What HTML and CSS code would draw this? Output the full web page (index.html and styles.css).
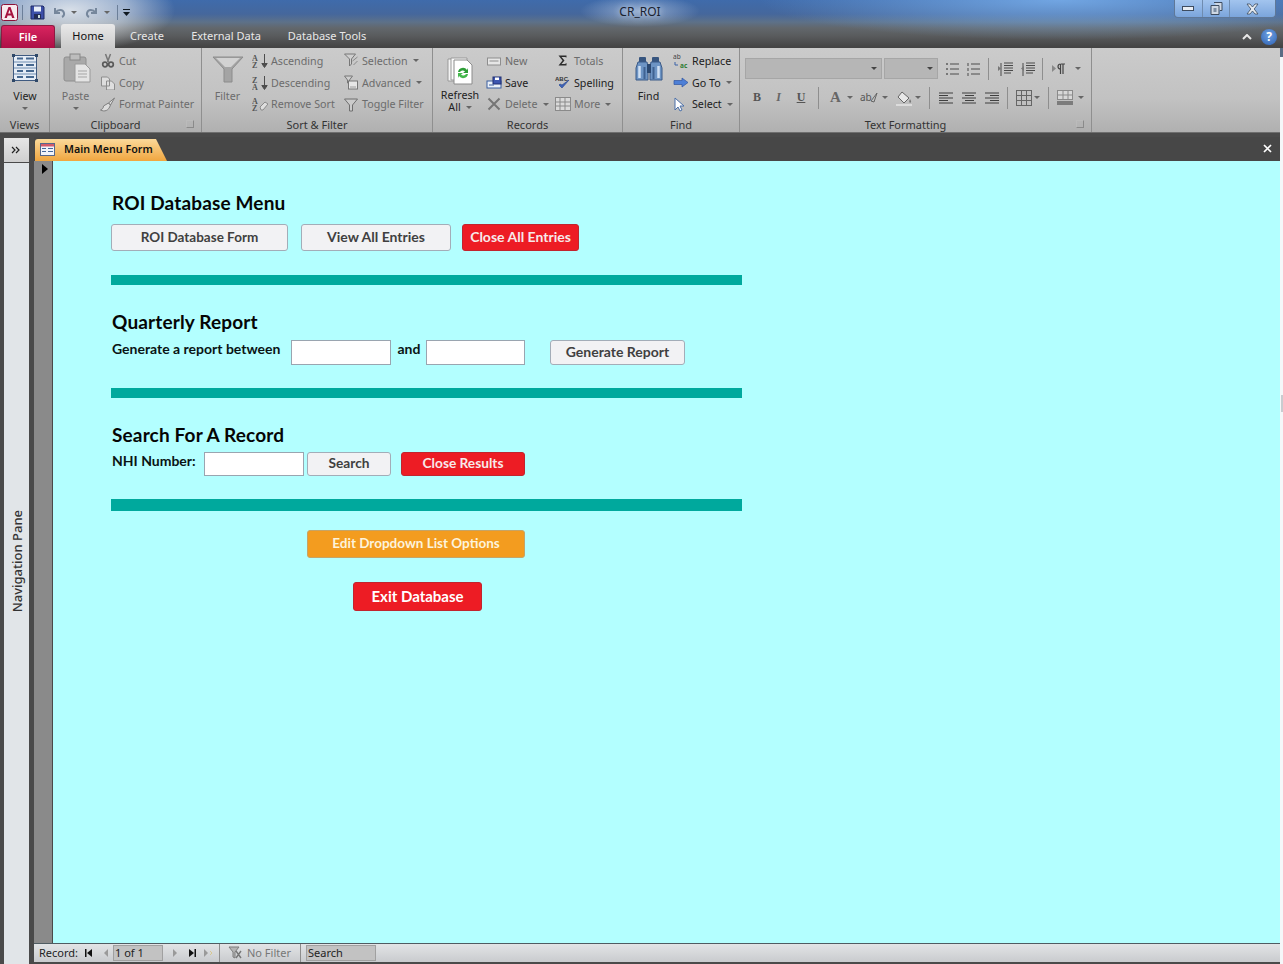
FILE: index.html
```html
<!DOCTYPE html>
<html lang="en">
<head>
<meta charset="UTF-8" />
<title>CR_ROI</title>
<link rel="stylesheet" href="styles.css">
</head>
<body>

<header class="chrome">
  <div class="titlebar">
    <div class="qat">
      <svg class="qat-logo" width="17" height="17" viewBox="0 0 17 17"><rect x=".5" y=".5" width="16" height="16" rx="2" fill="#f7e9ee" stroke="#8c1238"/><path d="M3.500 14 7.500 3h2l4 11h-2.400l-.8-2.500H6.600L5.800 14zM7.200 9.600h2.500L8.500 5.800z" fill="#a5123f"/></svg>
      <i class="qat-sep ml4"></i>
      <svg class="ml7" width="15" height="15" viewBox="0 0 15 15"><path d="M1 1h12l1 1v12H1z" fill="#3c4fa8" stroke="#1f2a66"/><rect x="4" y="1.500" width="7" height="5" fill="#e8eef8"/><rect x="4" y="9" width="7" height="5" fill="#222b55"/><rect x="8" y="10" width="2" height="3" fill="#cdd"/></svg>
      <svg class="ml7" width="14" height="13" viewBox="0 0 14 13"><path d="M3 2v5h5M3.500 6.500C6 3 11 3 12 7c.4 2-1 3.500-2 4" fill="none" stroke="#76879c" stroke-width="2"/></svg>
      <i class="caret caret-qat"></i>
      <svg class="ml8" width="14" height="13" viewBox="0 0 14 13"><path d="M11 2v5H6M10.500 6.500C8 3 3 3 2 7c-.4 2 1 3.500 2 4" fill="none" stroke="#76879c" stroke-width="2"/></svg>
      <i class="caret caret-qat"></i>
      <i class="qat-sep ml7"></i>
      <svg class="ml5" width="8" height="8" viewBox="0 0 8 8"><path d="M0 1h7v1H0zM0 4h7L3.500 8z" fill="#101820"/></svg>
    </div>
    <div class="doc-title">CR_ROI</div>
    <div class="win-btns">
      <span class="win-btn win-min"><svg width="13" height="7" viewBox="0 0 13 7"><rect x=".5" y="1.500" width="11" height="4" fill="#e8edf3" stroke="#3e4c60"/></svg></span>
      <span class="win-btn win-max"><svg width="13" height="13" viewBox="0 0 13 13"><path d="M4 .5h8v8h-2M1 3.500h8v9H1z" fill="#cfd8e4" stroke="#3e4c60"/><rect x="3.500" y="6" width="3" height="4" fill="#7d8ea3"/></svg></span>
      <span class="win-btn win-close"><svg width="15" height="12" viewBox="0 0 15 12"><path d="M2 1h3l2.500 3L10 1h3L9.200 6 13 11h-3L7.500 8 5 11H2l3.800-5z" fill="#e4e9ef" stroke="#3e4c60" stroke-width=".8"/></svg></span>
    </div>
  </div>
  <nav class="tabstrip">
    <span class="tab tab-file">File</span>
    <span class="tab tab-home">Home</span>
    <span class="tab tab-create">Create</span>
    <span class="tab tab-ext">External Data</span>
    <span class="tab tab-tools">Database Tools</span>
    <span class="tab-right">
      <svg width="10" height="6" viewBox="0 0 10 6"><path d="M1 5l4-4 4 4" fill="none" stroke="#e8e8e8" stroke-width="2"/></svg>
      <span class="help">?</span>
    </span>
  </nav>
</header>

<section class="ribbon">
  <div class="group g-views">
    <div class="group-body">
      <div class="big big-view">
        <svg width="26" height="28" viewBox="0 0 26 28"><rect x="1.500" y="1.500" width="23" height="25" fill="#e6edf6" stroke="#3f5a80"/><path d="M2 8h22M2 14h22M2 20h22" stroke="#6f8db0"/><path d="M5 4.500h6M14 4.500h8M5 11h6M14 11h8M5 17h6M14 17h8M5 23h6M14 23h8" stroke="#46688f" stroke-width="2"/><path d="M0 0h3v3H0zM23 0h3v3h-3zM0 25h3v3H0zM23 25h3v3h-3z" fill="#2f4868"/></svg>
        <span class="big-label">View</span>
        <i class="caret"></i>
      </div>
    </div>
    <div class="group-label">Views</div>
  </div>

  <div class="group g-clip">
    <div class="group-body">
      <div class="big big-paste off">
        <svg width="28" height="30" viewBox="0 0 28 30"><rect x="1" y="4" width="22" height="24" rx="2" fill="#a9a9a9" stroke="#8e8e8e"/><rect x="7" y="1" width="10" height="6" fill="#bdbdbd" stroke="#888"/><path d="M12 11h10l5 5v13H12z" fill="#e4e4e4" stroke="#9a9a9a"/><path d="M15 18h9M15 21h9M15 24h9" stroke="#a5a5a5"/></svg>
        <span class="big-label">Paste</span>
        <i class="caret"></i>
      </div>
      <div class="stack off">
        <div class="item"><svg width="13" height="15" viewBox="0 0 13 15"><path d="M4 1l3 8M9 1L6 9" stroke="#777" stroke-width="1.500"/><circle cx="3.500" cy="11.500" r="2.300" fill="none" stroke="#5a5a5a" stroke-width="1.700"/><circle cx="9.500" cy="11.500" r="2.300" fill="none" stroke="#5a5a5a" stroke-width="1.700"/></svg>Cut</div>
        <div class="item"><svg width="15" height="14" viewBox="0 0 15 14"><path d="M1 1h6l2 2v7H1zM6 5h5l3 3v6H6z" fill="#dedede" stroke="#8d8d8d"/></svg>Copy</div>
        <div class="item"><svg width="15" height="15" viewBox="0 0 15 15"><path d="M14 1L8 6l2 2zM8 6l-5 3c0 2-1 3-3 4 4 2 8 1 10-5z" fill="#dcdcdc" stroke="#7f7f7f"/></svg>Format Painter</div>
      </div>
    </div>
    <div class="group-label label-clip">Clipboard<i class="launcher"></i></div>
  </div>

  <div class="group g-sort">
    <div class="group-body">
      <div class="big big-filter off">
        <svg width="32" height="27" viewBox="0 0 32 27"><path d="M1 1h30L20 13v13h-8V13z" fill="#a4a4a4" stroke="#8c8c8c"/><path d="M4 2h24l-9 9h-6z" fill="#d2d2d2"/></svg>
        <span class="big-label">Filter</span>
      </div>
      <div class="stack stack-a off">
        <div class="item"><svg width="16" height="16" viewBox="0 0 16 16"><text x="0" y="7.500" class="az">A</text><text x="0" y="15" class="az">Z</text><path d="M12.500 1v12M9.800 10.500l2.700 4 2.700-4z" fill="#4d4d4d" stroke="#4d4d4d"/></svg>Ascending</div>
        <div class="item"><svg width="16" height="16" viewBox="0 0 16 16"><text x="0" y="7.500" class="az">Z</text><text x="0" y="15" class="az">A</text><path d="M12.500 1v12M9.800 10.500l2.700 4 2.700-4z" fill="#4d4d4d" stroke="#4d4d4d"/></svg>Descending</div>
        <div class="item"><svg width="16" height="16" viewBox="0 0 16 16"><text x="0" y="7.500" class="az">A</text><text x="0" y="15" class="az">Z</text><path d="M8 11l5-5 3 2-5 6H9z" fill="#dedede" stroke="#8a8a8a"/></svg>Remove Sort</div>
      </div>
      <div class="stack off">
        <div class="item"><svg width="15" height="15" viewBox="0 0 15 15"><path d="M1 1h11L8 6v5l-2 2V6z" fill="#cfcfcf" stroke="#777"/><path d="M9 8l5-4M10 12l4-4" stroke="#8a8a8a"/></svg>Selection<i class="caret"></i></div>
        <div class="item"><svg width="15" height="15" viewBox="0 0 15 15"><path d="M1 1h8L6 5v4L4 8V5z" fill="#cfcfcf" stroke="#777"/><rect x="5" y="6" width="9" height="8" fill="#e6e6e6" stroke="#777"/><path d="M7 12h1M9 12h1M11 12h1" stroke="#555"/></svg>Advanced<i class="caret"></i></div>
        <div class="item"><svg width="15" height="15" viewBox="0 0 15 15"><path d="M1 2h13L9 8v6H6V8z" fill="#cbcbcb" stroke="#6f6f6f"/></svg>Toggle Filter</div>
      </div>
    </div>
    <div class="group-label">Sort &amp; Filter</div>
  </div>

  <div class="group g-records">
    <div class="group-body">
      <div class="big big-refresh">
        <svg width="27" height="29" viewBox="0 0 27 29"><path d="M1 3h16v22H1z" fill="#f4f4f4" stroke="#999"/><path d="M4 2h16v22H4z" fill="#fafafa" stroke="#999"/><path d="M7 4h13l5 5v19H7z" fill="#fff" stroke="#8c8c8c"/><path d="M11 16a5 5 0 0 1 9-2l1-2v5h-5l2-1.500a3 3 0 0 0-5 .5z" fill="#2e9e38"/><path d="M21 18a5 5 0 0 1-9 2l-1 2v-5h5l-2 1.500a3 3 0 0 0 5-.5z" fill="#45b84c"/></svg>
        <span class="big-label">Refresh<br>All<i class="caret caret-inline"></i></span>
      </div>
      <div class="stack stack-c">
        <div class="item off"><svg width="15" height="11" viewBox="0 0 15 11"><rect x="1" y="3" width="13" height="7" fill="#e6e6e6" stroke="#8e8e8e"/><path d="M3 6h9" stroke="#8e8e8e"/></svg>New</div>
        <div class="item"><svg width="16" height="13" viewBox="0 0 16 13"><rect x="1" y="5" width="14" height="7" fill="#eaf0f8" stroke="#3a5fa0"/><rect x="7" y="1" width="8" height="7" fill="#3c55b0" stroke="#1f2f72"/><rect x="9" y="1.500" width="4" height="2.500" fill="#fff"/><path d="M3 9h5" stroke="#3a5fa0"/></svg>Save</div>
        <div class="item off"><svg width="14" height="14" viewBox="0 0 14 14"><path d="M1.500 1.500l11 11M12.500 1.500l-11 11" stroke="#767676" stroke-width="2"/></svg>Delete<i class="caret"></i></div>
      </div>
      <div class="stack">
        <div class="item off"><svg width="15" height="13" viewBox="0 0 15 13"><path d="M3 1.500h8v2L9.500 3H6l3 3.500L6 10h3.500L11 9v2.500H3L7 6.500z" fill="#2b2b2b"/></svg>Totals</div>
        <div class="item"><svg width="16" height="15" viewBox="0 0 16 15"><text x="0" y="6" class="abc">ABC</text><path d="M4 10l3 3 7-8-7 5-2-1z" fill="#3d63b8" stroke="#2c4c96" stroke-width=".7"/></svg>Spelling</div>
        <div class="item off"><svg width="16" height="14" viewBox="0 0 16 14"><rect x=".5" y=".5" width="15" height="13" fill="#dadada" stroke="#8a8a8a"/><path d="M1 5h14M1 9h14M5 1v12M10 1v12" stroke="#8a8a8a"/></svg>More<i class="caret"></i></div>
      </div>
    </div>
    <div class="group-label">Records</div>
  </div>

  <div class="group g-find">
    <div class="group-body">
      <div class="big big-find">
        <svg width="28" height="24" viewBox="0 0 28 24"><rect x="4" y="0" width="7" height="6" rx="1" fill="#37557f"/><rect x="17" y="0" width="7" height="6" rx="1" fill="#37557f"/><path d="M3 5h9l1 5v13H1V11zM25 5h-9l-1 5v13h12V11z" fill="#6d94c4" stroke="#3a5a88"/><rect x="12" y="7" width="4" height="9" fill="#2b4870"/><path d="M4.500 9v12M23.500 9v12" stroke="#cfe0f3" stroke-width="2.500"/><path d="M9.500 10v12M18.500 10v12" stroke="#3f6292" stroke-width="2"/></svg>
        <span class="big-label">Find</span>
      </div>
      <div class="stack">
        <div class="item"><svg class="ico-rep" width="16" height="18" viewBox="0 0 16 18"><text x="0" y="7" class="rep">ab</text><text x="7" y="16" class="rep rep-g">ac</text><path d="M2 10v3h3" fill="none" stroke="#3a63a8"/></svg>Replace</div>
        <div class="item"><svg width="16" height="11" viewBox="0 0 16 11"><path d="M1 3.500h8V1l6 4.500L9 10V7.500H1z" fill="#4d7fd6" stroke="#2f55a0" stroke-width=".7"/></svg>Go To<i class="caret"></i></div>
        <div class="item"><svg width="16" height="15" viewBox="0 0 16 15"><path d="M2 1v12l3-3 2 4 2-1-2-4h4z" fill="#fff" stroke="#4a6fa8"/></svg>Select<i class="caret"></i></div>
      </div>
    </div>
    <div class="group-label">Find</div>
  </div>

  <div class="group g-text">
    <div class="group-body text-body">
      <div class="text-row">
        <span class="combo combo-font"><i class="caret"></i></span>
        <span class="combo combo-size"><i class="caret"></i></span>
        <svg class="ml7" width="14" height="14" viewBox="0 0 14 14"><path d="M5 2h9M5 7h9M5 12h9" stroke="#4d4d4d"/><path d="M1 1h2v2H1zM1 6h2v2H1zM1 11h2v2H1z" fill="#777"/></svg>
        <svg class="ml7" width="14" height="14" viewBox="0 0 14 14"><path d="M5 2h9M5 7h9M5 12h9" stroke="#4d4d4d"/><path d="M1 1h2v3H1zM1 6h2v3H1zM1 11h2v3H1z" fill="#888"/></svg>
        <i class="vsep ml8"></i>
        <svg class="ml9" width="16" height="14" viewBox="0 0 16 14"><path d="M6 1h9M6 3.500h9M6 6h9M6 8.500h9M6 11h7M3 1v13" stroke="#4a4a4a"/><path d="M0 4l3 2.500L0 9z" fill="#777"/></svg>
        <svg class="ml6" width="16" height="14" viewBox="0 0 16 14"><path d="M6 1h9M6 3.500h9M6 6h9M6 8.500h9M6 11h7M3 1v13" stroke="#4a4a4a"/><path d="M4 4L1 6.500 4 9z" fill="#777"/></svg>
        <i class="vsep ml6"></i>
        <svg class="ml9" width="13" height="11" viewBox="0 0 13 11"><path d="M0 2l4 3.500L0 9z" fill="#888"/><path d="M9 1h4M8.500 1v10M11 1v10M8.500 1a2.500 2.500 0 0 0 0 5" fill="none" stroke="#444" stroke-width="1.200"/></svg>
        <i class="caret ml10"></i>
      </div>
      <div class="text-row text-row-2">
        <span class="fmt-b">B</span>
        <span class="fmt-i">I</span>
        <span class="fmt-u">U</span>
        <i class="vsep"></i>
        <span class="fmt-a ml11">A</span><i class="caret ml6"></i>
        <svg class="ml7" width="19" height="14" viewBox="0 0 19 14"><text x="0" y="10" class="hl">ab</text><path d="M11 10l6-8-3 9z" fill="none" stroke="#666"/></svg><i class="caret ml3"></i>
        <svg class="ml8" width="17" height="16" viewBox="0 0 17 16"><path d="M6 2l7 6-5 5-6-6z" fill="#e8e8e8" stroke="#666"/><path d="M14 9c1 2 2 3 0 4-1-1-1-2 0-4z" fill="#777"/><rect x="0" y="14" width="16" height="2" fill="#dcdcdc"/></svg><i class="caret ml2"></i>
        <i class="vsep ml8"></i>
        <svg class="ml9" width="15" height="12" viewBox="0 0 15 12"><path d="M0 1h14M0 3.500h9M0 6h14M0 8.500h9M0 11h14" stroke="#3f3f3f"/></svg>
        <svg class="ml8" width="15" height="12" viewBox="0 0 15 12"><path d="M0 1h14M3 3.500h9M0 6h14M3 8.500h9M0 11h14" stroke="#3f3f3f"/></svg>
        <svg class="ml8" width="15" height="12" viewBox="0 0 15 12"><path d="M0 1h14M5 3.500h9M0 6h14M5 8.500h9M0 11h14" stroke="#3f3f3f"/></svg>
        <i class="vsep ml7"></i>
        <svg class="ml8" width="16" height="16" viewBox="0 0 16 16"><rect x=".5" y=".5" width="15" height="15" fill="none" stroke="#666"/><path d="M5.500 1v14M10.500 1v14M1 5.500h14M1 10.500h14" stroke="#666"/></svg><i class="caret ml2"></i>
        <i class="vsep ml8"></i>
        <svg class="ml8" width="17" height="15" viewBox="0 0 17 15"><rect x=".5" y=".5" width="15" height="9" fill="#d8d8d8" stroke="#8a8a8a"/><path d="M1 5h14M6 1v8M11 1v8" stroke="#8a8a8a"/><rect x="0" y="11" width="16" height="4" fill="#7c7c7c"/></svg><i class="caret ml4"></i>
      </div>
    </div>
    <div class="group-label label-text">Text Formatting<i class="launcher"></i></div>
  </div>
  <div class="ribbon-rest"></div>
</section>

<div class="workspace">
  <aside class="navpane">
    <div class="nav-toggle">
      <svg width="9" height="8" viewBox="0 0 9 8"><path d="M1 1l3 3-3 3M5 1l3 3-3 3" fill="none" stroke="#222" stroke-width="1.200"/></svg>
    </div>
    <div class="nav-shutter"><span class="nav-text">Navigation Pane</span></div>
  </aside>

  <main class="document">
    <div class="doc-tabs">
      <span class="doc-tab">
        <svg width="15" height="13" viewBox="0 0 15 13"><rect x=".5" y=".5" width="14" height="12" fill="#f2f4fa" stroke="#56688c"/><rect x="1" y="1" width="13" height="2.500" fill="#d25a6a"/><path d="M2 5.500h4M2 8.500h4M8 5.500h5M8 8.500h5" stroke="#46689a" stroke-width="1.200"/></svg>
        Main Menu Form
      </span>
      <svg class="doc-close" width="9" height="9" viewBox="0 0 9 9"><path d="M1 1l7 7M8 1L1 8" stroke="#fff" stroke-width="1.700"/></svg>
    </div>

    <div class="form-area">
      <div class="selector"><i class="selector-arrow"></i></div>
      <div class="form">
        <section class="form-section sec-menu">
          <h2>ROI Database Menu</h2>
          <div class="row row-menu">
            <button class="btn btn-db">ROI Database Form</button>
            <button class="btn btn-view">View All Entries</button>
            <button class="btn btn-red btn-closeall">Close All Entries</button>
          </div>
        </section>
        <div class="divider"></div>

        <section class="form-section sec-report">
          <h2>Quarterly Report</h2>
          <div class="row row-report">
            <label class="lbl lbl-between">Generate a report between</label>
            <input class="field field-a" type="text">
            <label class="lbl lbl-and">and</label>
            <input class="field field-b" type="text">
            <button class="btn btn-generate">Generate Report</button>
          </div>
        </section>
        <div class="divider"></div>

        <section class="form-section sec-search">
          <h2>Search For A Record</h2>
          <div class="row row-search">
            <label class="lbl lbl-nhi">NHI Number:</label>
            <input class="field field-nhi" type="text">
            <button class="btn btn-search">Search</button>
            <button class="btn btn-red btn-results">Close Results</button>
          </div>
        </section>
        <div class="divider divider-thick"></div>

        <button class="btn btn-orange">Edit Dropdown List Options</button>
        <button class="btn btn-red btn-exit">Exit Database</button>
      </div>
    </div>

    <footer class="statusbar">
      <span class="rec-label">Record:</span>
      <svg class="rec-first" width="7" height="8" viewBox="0 0 7 8"><path d="M0 0h1.500v8H0zM7 0v8L2 4z" fill="#111"/></svg>
      <svg class="rec-prev" width="4" height="8" viewBox="0 0 4 8"><path d="M4 0v8L0 4z" fill="#9a9a9a"/></svg>
      <span class="rec-box">1 of 1</span>
      <svg class="rec-next" width="4" height="8" viewBox="0 0 4 8"><path d="M0 0v8l4-4z" fill="#9a9a9a"/></svg>
      <svg class="rec-last" width="7" height="8" viewBox="0 0 7 8"><path d="M7 0H5.500v8H7zM0 0v8l5-4z" fill="#111"/></svg>
      <svg class="rec-new" width="9" height="8" viewBox="0 0 9 8"><path d="M0 0v8l4-4z" fill="#9a9a9a"/><path d="M6 2l2 2-2 2" fill="none" stroke="#d8c890"/></svg>
      <i class="stat-sep stat-sep-a"></i>
      <svg class="rec-filter" width="15" height="13" viewBox="0 0 15 13"><path d="M1 1h10L7 6v6L5 11V6z" fill="#b4b4b4" stroke="#7d7d7d"/><path d="M8 5l5 7M13 5l-5 7" stroke="#777" stroke-width="1.400"/></svg>
      <span class="rec-nofilter">No Filter</span>
      <i class="stat-sep"></i>
      <span class="rec-search">Search</span>
    </footer>
  </main>
</div>
<i class="edge-notch"></i>

</body>
</html>
```

FILE: styles.css
```css
html, body { margin:0; padding:0; }
body { width:1283px; height:964px; overflow:hidden; font-family:"Noto Sans", sans-serif; font-size:10.700px; color:#222; background:linear-gradient(#5b6c84 57px, #f5f7f9 57px); position:relative; }

/* spacing helpers for the icon rows */
.ml2 { margin-left:2px !important; }
.ml3 { margin-left:3px !important; }
.ml4 { margin-left:4px !important; }
.ml5 { margin-left:5px !important; }
.ml6 { margin-left:6px !important; }
.ml7 { margin-left:7px !important; }
.ml8 { margin-left:8px !important; }
.ml9 { margin-left:9px !important; }
.ml10 { margin-left:10px !important; }
.ml11 { margin-left:11px !important; }

/* title bar + tabs */
.chrome { height:48px; background:
  radial-gradient(ellipse 105px 42px at 70px 10px, rgba(232,236,240,.9), rgba(232,236,240,.55) 55%, rgba(232,236,240,0) 100%),
  radial-gradient(ellipse 60px 16px at 640px 11px, rgba(210,225,245,.55), rgba(210,225,245,0) 100%),
  radial-gradient(ellipse 300px 40px at 1060px 0, rgba(130,185,245,.75), rgba(130,185,245,0) 100%),
  linear-gradient(#3f6bab 0, #45679c 14px, #5d7189 22px, #62676c 28px, #595b5d 36px, #444 47px); }
.titlebar { height:24px; display:flex; align-items:flex-start; position:relative; }
.qat { display:flex; align-items:center; padding:2px 0 0 1px; width:560px; box-sizing:border-box; height:22px; }
.qat-sep { width:1px; height:15px; background:#6c7f99; }
.caret-qat { margin-left:3px; border-top-color:#7a8ba2; }
.doc-title { width:160px; text-align:center; font-size:12px; line-height:23px; color:#1a2230; text-shadow:0 0 6px #dfe8f5; }
.win-btns { margin-left:auto; margin-right:7px; display:flex; height:17px; border:1px solid #5f7898; border-top:none; border-radius:0 0 4px 4px; background:linear-gradient(#a2c4ee,#7ba5dc); }
.win-btn { display:flex; align-items:center; justify-content:center; height:17px; border-right:1px solid #6f8cb0; box-sizing:border-box; }
.win-min { width:28px; }
.win-max { width:27px; }
.win-close { width:45px; border-right:none; }

.tabstrip { height:24px; display:flex; align-items:flex-end; position:relative; font-size:11px; }
.tab { display:block; height:23px; line-height:22px; text-align:center; color:#e8e8e8; }
.tab-file { width:54px; margin-left:1px; background:linear-gradient(#d8245f,#ad0f46); border:1px solid #8d1a42; border-bottom:none; box-sizing:border-box; border-radius:3px 3px 0 0; color:#fff; font-weight:600; }
.tab-home { width:54px; margin-left:6px; height:24px; line-height:23px; background:linear-gradient(#e9e9e9,#cbcbcb); color:#111; border-radius:3px 3px 0 0; }
.tab-create { width:64px; }
.tab-ext { width:94px; }
.tab-tools { width:108px; }
.tab-right { margin-left:auto; display:flex; align-items:center; gap:9px; height:22px; padding-right:6px; }
.help { width:16px; height:16px; border-radius:50%; background:radial-gradient(circle at 50% 35%,#6ea0e0,#2e62b4); color:#fff; font-weight:700; font-size:12px; line-height:16px; text-align:center; }

/* ribbon */
.ribbon { width:1280px; height:85px; display:flex; background:linear-gradient(#cbcbcb,#c2c2c2 60%,#b0b0b0); border-bottom:1px solid #6e6e6e; box-sizing:border-box; }
.group { display:flex; flex-direction:column; border-right:1px solid #8f8f8f; box-sizing:border-box; flex:none; height:84px; }
.group-body { height:67px; flex:none; display:flex; padding-top:2px; box-sizing:border-box; }
.group-label { height:17px; line-height:20px; text-align:center; color:#333; position:relative; font-size:11px; }
.label-clip { padding-right:20px; }
.label-text { padding-right:20px; }
.launcher { position:absolute; right:7px; top:5px; width:6px; height:6px; border:1px solid #8a8a8a; border-left-color:#bbb; border-top-color:#bbb; }
.g-views { width:50px; }
.g-clip { width:152px; }
.g-sort { width:231px; }
.g-records { width:190px; }
.g-find { width:117px; }
.g-text { width:352px; }
.ribbon-rest { flex:1; }

.off { color:#6c6c6c; }
.big { display:flex; flex-direction:column; align-items:center; line-height:13px; flex:none; }
.big svg { flex:none; }
.big-label { text-align:center; }
.big-view { width:50px; padding-top:4px; color:#222; }
.big-view .big-label { margin-top:8px; }
.big-view .caret { margin:4px 0 0; }
.big-paste { width:49px; margin-left:1px; padding-top:3px; }
.big-paste svg { margin-left:2px; }
.big-paste .big-label { margin-top:7px; }
.big-paste .caret { margin:4px 0 0; }
.big-filter { width:49px; padding-top:6px; margin-left:1px; }
.big-filter .big-label { margin-top:7px; }
.big-refresh { width:52px; padding-top:6px; color:#222; margin-left:1px; }
.big-refresh .big-label { margin-top:4px; line-height:12px; }
.big-find { width:49px; padding-top:7px; color:#222; margin-left:1px; }
.big-find .big-label { margin-top:9px; }
.stack { display:flex; flex-direction:column; flex:none; }
.stack-a { width:91px; }
.stack-c { width:69px; }
.item { height:22px; display:flex; align-items:center; white-space:nowrap; }
.item svg { width:16px; margin-right:3px; flex:none; }
.item:not(.off) { color:#1c1c1c; }
.off .item { color:#6c6c6c; }

.caret { display:inline-block; width:0; height:0; border:3px solid transparent; border-bottom:none; border-top:3px solid #666; margin-left:5px; flex:none; }
.caret-inline { vertical-align:2px; }

.az { font:700 8px "Liberation Serif", serif; fill:#555; }
.abc { font:700 6px "Liberation Sans", sans-serif; fill:#333; }
.rep { font:6.500px "Noto Sans", sans-serif; fill:#444; }
.rep-g { font-weight:700; fill:#2e7d32; }
.hl { font:10px "Noto Sans", sans-serif; fill:#555; }

.text-body { flex-direction:column; padding:10px 0 0 5px; }
.text-row { display:flex; align-items:center; height:21px; }
.text-row-2 { margin-top:8px; padding-left:8px; }
.combo { display:flex; align-items:center; justify-content:flex-end; height:21px; box-sizing:border-box; background:#b6b6b6; border:1px solid #a6a6a6; }
.combo .caret { margin:0 4px 0 0; border-top-color:#444; }
.combo-font { width:137px; }
.combo-size { width:54px; margin-left:2px; }
.text-row svg { flex:none; }
.vsep { width:1px; height:22px; background:#8e8e8e; flex:none; }
.fmt-b, .fmt-i, .fmt-u { font-family:"Liberation Serif", serif; font-weight:700; font-size:12px; color:#555; text-align:center; }
.fmt-b { width:8px; margin-right:14px; }
.fmt-i { font-style:italic; color:#666; width:7px; margin-right:14px; }
.fmt-u { text-decoration:underline; width:10px; margin-right:12px; }
.fmt-a { font-family:"Liberation Serif", serif; font-weight:700; font-size:15px; color:#666; }

/* workspace */
.workspace { width:1280px; height:831px; display:flex; padding-top:4px; box-sizing:border-box; background:#4a4a4a; }
.navpane { width:25px; margin:0 1px 0 4px; flex:none; display:flex; flex-direction:column; }
.nav-toggle { height:24px; margin:1px 0 1px 0; display:flex; align-items:center; justify-content:center; background:linear-gradient(#e6e6e6,#cfcfcf); box-sizing:border-box; }
.nav-toggle svg { margin-right:3px; }
.nav-shutter { flex:1; background:#e1e5e8; display:flex; align-items:center; justify-content:center; }
.nav-text { writing-mode:vertical-rl; transform:rotate(180deg); font-size:13px; font-weight:500; color:#333; margin-bottom:4px; margin-left:1px; }

.document { flex:1; display:flex; flex-direction:column; min-width:0; padding-left:4px; }
.doc-tabs { height:24px; flex:none; display:flex; align-items:flex-end; background:#474747; position:relative; }
.doc-tab { display:flex; align-items:center; gap:9px; height:20px; width:127px; margin-left:1px; padding:0 0 2px 5px; color:#111; font-weight:600; background:linear-gradient(#fbd99a,#f0a63f); clip-path:polygon(0 0,121px 0,132px 100%,0 100%); border-radius:3px 0 0 0; white-space:nowrap; }
.doc-close { margin-left:auto; margin-right:8px; align-self:center; margin-bottom:1px; }

.form-area { flex:1; display:flex; min-height:0; }
.selector { width:18px; flex:none; background:#8a8a8a; border-right:1px solid #4a4a4a; }
.selector-arrow { display:block; width:0; height:0; margin:3px 0 0 8px; border:5px solid transparent; border-left:6px solid #000; border-right:none; }
.form { flex:1; background:#b3ffff; padding-left:58px; font-family:Lato, sans-serif; }

.form-section h2 { margin:0; font-size:19px; letter-spacing:.15px; font-weight:700; line-height:24px; color:#050505; padding-left:1px; }
.sec-menu { padding-top:30px; }
.sec-report { padding-top:25px; }
.sec-search { padding-top:25px; }
.row { display:flex; align-items:flex-start; }
.row-menu { margin-top:9px; }
.row-report { margin-top:6px; }
.row-search { margin-top:5px; }

.divider { width:631px; height:10px; background:#00a99d; }
.sec-menu + .divider { margin-top:24px; }
.sec-report + .divider { margin-top:23px; }
.sec-search + .divider { margin-top:23px; }
.divider-thick { height:12px; }

.lbl { font-size:14px; font-weight:700; color:#0a1414; padding-left:1px; line-height:18px; }
.lbl-between { width:179px; white-space:nowrap; }
.lbl-and { width:34px; text-align:center; }
.lbl-nhi { width:92px; white-space:nowrap; }
.field { display:block; height:25px; box-sizing:border-box; margin:0; padding:0; background:#fff; border:1px solid #9aa5b0; border-radius:0; }
.field-a { width:100px; }
.field-b { width:99px; }
.field-nhi { width:100px; height:24px; }

.btn { display:block; margin:0; padding:0 0 2px; box-sizing:border-box; font-family:Lato, sans-serif; font-weight:700; font-size:14px; border-radius:3px; border:1px solid #a3adb8; background:#f2f2f4; color:#404040; }
.btn-red { background:#ed1c24; color:#f7eaea; border-color:#c2242e; }
.btn-db { width:177px; height:27px; font-size:13.500px; }
.btn-view { width:150px; height:27px; margin-left:13px; }
.btn-closeall { width:117px; height:27px; margin-left:11px; }
.btn-generate { width:135px; height:25px; margin-left:25px; }
.btn-search { width:84px; height:24px; margin-left:3px; font-size:13.700px; padding-bottom:3px; }
.btn-results { width:124px; height:24px; margin-left:10px; font-size:13.700px; padding-bottom:3px; }
.btn-orange { width:218px; height:28px; margin:19px 0 0 196px; font-size:13.500px; background:#f39c1f; color:#fdf3dc; border-color:#c5a467; }
.btn-exit { width:129px; height:29px; margin:24px 0 0 242px; font-size:15px; color:#fff; }

/* record bar */
.statusbar { height:19px; margin-bottom:2px; padding-bottom:1px; flex:none; display:flex; align-items:center; background:linear-gradient(#e2e4e6,#c9cbce); border-top:1px solid #4f5c62; box-sizing:border-box; color:#222; font-size:11px; }
.rec-label { margin-left:5px; width:44px; }
.rec-first { margin-left:2px; }
.rec-prev { margin-left:12px; }
.rec-box { width:50px; height:16px; margin-left:5px; box-sizing:border-box; padding-left:1px; line-height:14px; background:#c2c2c2; border:1px solid #a0a0a0; }
.rec-next { margin-left:10px; }
.rec-last { margin-left:12px; }
.rec-new { margin-left:8px; }
.stat-sep { width:1px; height:18px; background:#8d8d8d; margin-left:9px; }
.stat-sep-a { margin-left:6px; }
.rec-filter { margin-left:8px; }
.rec-nofilter { margin-left:4px; color:#777; width:44px; white-space:nowrap; }
.rec-search { width:70px; height:16px; margin-left:5px; box-sizing:border-box; padding-left:1px; line-height:14px; background:#c2c2c2; border:1px solid #a0a0a0; }
.edge-notch { position:absolute; left:1281px; top:395px; width:2px; height:17px; background:#c9ccd0; }
```
